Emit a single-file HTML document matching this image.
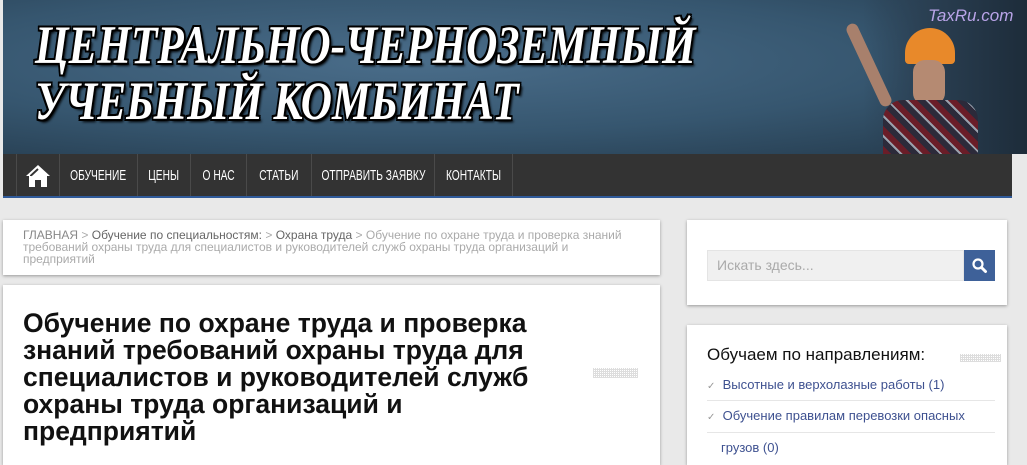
<!DOCTYPE html>
<html><head><meta charset="utf-8"><style>
*{margin:0;padding:0;box-sizing:border-box}
body{width:1027px;height:455px;overflow:hidden;background:#e9e9e9;font-family:"Liberation Sans",sans-serif;position:relative}
.hdr{position:absolute;left:3px;top:0;width:1024px;height:154px;background:radial-gradient(ellipse at 40% 40%,#4a6d8a 0%,#36566f 55%,#243a4c 100%);overflow:hidden}
.t{position:absolute;color:#fff;font-family:"Liberation Serif",serif;font-weight:bold;font-style:italic;white-space:nowrap;transform-origin:0 0;
text-shadow:-2px -2px 0 #000,2px -2px 0 #000,-2px 2px 0 #000,2px 2px 0 #000,0 2px 0 #000,2px 0 0 #000,-2px 0 0 #000,0 -2px 0 #000,3px 3px 3px #000}
.nav{position:absolute;left:3px;top:154px;width:1009px;height:44px;background:#333;border-bottom:2px solid #2f5a9a}
.nav div{position:absolute;top:0;height:42px;border-left:1px solid #4a4a4a;color:#fff;font-size:15px;line-height:44px;text-align:center;white-space:nowrap;display:flex;justify-content:center}
.nav span{display:inline-block;transform:scaleX(.68)}
.box{position:absolute;background:#fff;box-shadow:0 1px 3px rgba(0,0,0,.35)}
</style></head><body>
<div class="hdr">
<div style="position:absolute;left:860px;top:0;width:164px;height:154px;background:linear-gradient(90deg,rgba(36,58,76,0),#2a3f52 40%,#1d2c3a)"></div>
<div style="position:absolute;left:902px;top:28px;width:50px;height:36px;border-radius:26px 26px 4px 4px;background:#e8892a"></div>
<div style="position:absolute;left:910px;top:60px;width:32px;height:45px;border-radius:12px;background:#b58a72"></div>
<div style="position:absolute;left:880px;top:100px;width:95px;height:54px;border-radius:20px 20px 0 0;background:repeating-linear-gradient(45deg,#6a1d28 0 6px,#2c2a3a 6px 12px,#9aa0ac 12px 14px)"></div>
<div style="position:absolute;left:860px;top:20px;width:12px;height:90px;background:#a8806c;transform:rotate(-25deg);border-radius:6px"></div>
<div style="position:absolute;left:925px;top:6px;color:#b9a4e8;font-size:17px;font-style:italic">TaxRu.com</div>
<div class="t" style="left:32px;top:14px;font-size:54px;transform:scaleX(.8)">ЦЕНТРАЛЬНО-ЧЕРНОЗЕМНЫЙ</div>
<div class="t" style="left:32px;top:70px;font-size:54px;transform:scaleX(.8)">УЧЕБНЫЙ КОМБИНАТ</div>
</div>
<div class="nav">
<div style="left:13px;width:43px"><svg width="26" height="24" viewBox="0 0 26 24" style="margin-top:10px"><path d="M13 1 L1 12 L4 12 L4 23 L10 23 L10 16 L16 16 L16 23 L22 23 L22 12 L25 12 Z" fill="#fff"/><path d="M13 5 L6 11.5 L6 12" stroke="#333" stroke-width="2" fill="none"/></svg></div>
<div style="left:56px;width:78px"><span>ОБУЧЕНИЕ</span></div>
<div style="left:134px;width:53px"><span>ЦЕНЫ</span></div>
<div style="left:187px;width:56px"><span>О НАС</span></div>
<div style="left:243px;width:65px"><span>СТАТЬИ</span></div>
<div style="left:308px;width:123px"><span>ОТПРАВИТЬ ЗАЯВКУ</span></div>
<div style="left:431px;width:78px"><span>КОНТАКТЫ</span></div>
<div style="left:509px;width:1px"></div>
</div>
<div class="box" style="left:3px;top:220px;width:657px;height:55px;padding:9px 20px 0 20px;font-size:12px;line-height:12px;color:#aaa">
<span style="color:#888">ГЛАВНАЯ</span> &gt; <span style="color:#666">Обучение по специальностям:</span> &gt; <span style="color:#666">Охрана труда</span> &gt; Обучение по охране труда и проверка знаний требований охраны труда для специалистов и руководителей служб охраны труда организаций и предприятий</div>
<div class="box" style="left:3px;top:285px;width:657px;height:180px">
<div style="position:absolute;left:20px;top:25px;white-space:nowrap;font-size:26.5px;font-weight:bold;line-height:27px;color:#111">Обучение по охране труда и проверка<br>знаний требований охраны труда для<br>специалистов и руководителей служб<br>охраны труда организаций и<br>предприятий</div>
<div style="position:absolute;left:590px;top:83px;width:45px;height:10px;background:repeating-linear-gradient(90deg,#ddd 0 1px,transparent 1px 2px),repeating-linear-gradient(0deg,#ddd 0 1px,transparent 1px 2px)"></div>
</div>
<div class="box" style="left:687px;top:220px;width:320px;height:85px">
<div style="position:absolute;left:20px;top:30px;width:257px;height:31px;background:#f0f0f0;border:1px solid #e4e4e4;color:#aaa;font-size:14px;line-height:29px;padding-left:9px">Искать здесь...</div>
<div style="position:absolute;left:277px;top:30px;width:31px;height:31px;background:#3e6199"><svg width="31" height="31" viewBox="0 0 31 31"><circle cx="14" cy="14" r="4.5" stroke="#fff" stroke-width="2.2" fill="none"/><path d="M17.5 17.5 L21.5 21.5" stroke="#fff" stroke-width="3" stroke-linecap="round"/></svg></div>
</div>
<div class="box" style="left:687px;top:325px;width:320px;height:140px">
<div style="position:absolute;left:20px;top:20px;font-size:17px;color:#111">Обучаем по направлениям:</div>
<div style="position:absolute;left:273px;top:29px;width:41px;height:8px;background:repeating-linear-gradient(90deg,#ddd 0 1px,transparent 1px 2px),repeating-linear-gradient(0deg,#ddd 0 1px,transparent 1px 2px)"></div>
<div style="position:absolute;left:20px;top:47px;width:288px;height:29px;border-bottom:1px solid #e6e6e6;font-size:13px;line-height:26px;color:#3e5190"><span style="color:#999;font-size:10px">✓</span>&nbsp; Высотные и верхолазные работы (1)</div>
<div style="position:absolute;left:20px;top:76px;width:288px;height:32px;border-bottom:1px solid #e6e6e6;font-size:13px;line-height:30px;color:#3e5190"><span style="color:#999;font-size:10px">✓</span>&nbsp; Обучение правилам перевозки опасных</div>
<div style="position:absolute;left:34px;top:110px;font-size:13px;line-height:26px;color:#3e5190">грузов (0)</div>
</div>
</body></html>
